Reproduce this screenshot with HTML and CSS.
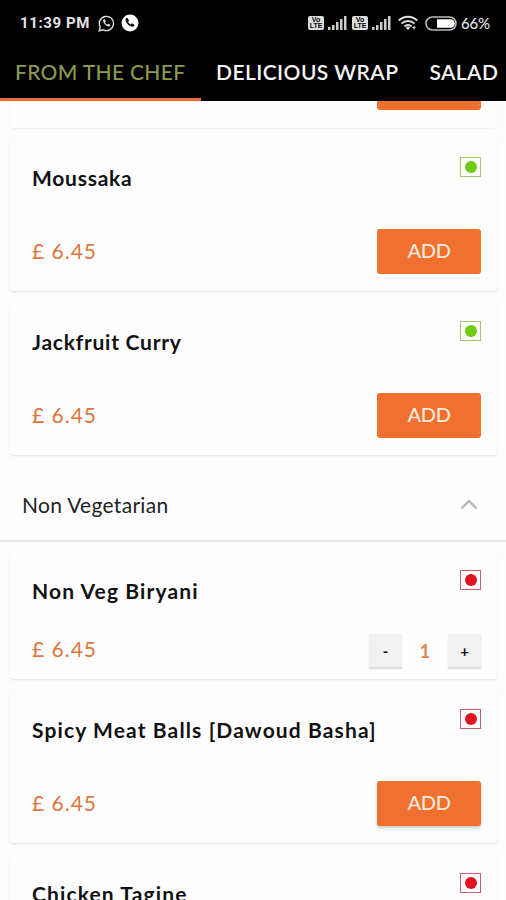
FILE: index.html
```html
<!DOCTYPE html>
<html lang="en">
<head>
<meta charset="utf-8">
<meta name="viewport" content="width=device-width, initial-scale=1">
<title>Menu</title>
<link rel="stylesheet" href="styles.css">
</head>
<body>
<div class="screen">
  <header class="top">
    <div class="status">
      <span class="clock">11:39 PM</span>
      <svg class="app" width="17" height="17" viewBox="0 0 17 17"><path d="M1.2 15.8l1-3.9A7.1 7.1 0 1 1 5.2 14.8z" fill="none" stroke="#ddd" stroke-width="1.4"/><path d="M5.8 4.3c-1.3 1-.8 3 1.1 5s4 2.800 5.200 1.500l.2-1-2-1.100-1 .9c-1-.4-1.700-1.100-2.200-2.200l.7-.9-.9-2.200z" fill="#ddd"/></svg>
      <svg class="app call" width="18" height="18" viewBox="0 0 18 18"><circle cx="9" cy="9" r="8.500" fill="#fff"/><path d="M5.300 4.100c-1.500 1.200-1 3.800 1.400 6.200s5 3.200 6.500 1.500l.1-1.200-2.400-1.300-1.200 1.100c-1.200-.5-2.100-1.400-2.600-2.600l.9-1.100-1.200-2.600z" fill="#111"/></svg>
      <div class="signals">
        <div class="volte"><span>Vo</span><span>LTE</span></div>
        <svg class="bars" width="20" height="14" viewBox="0 0 20 14"><path d="M1 11h2.500v3H1zM5 9h2.500v5H5zM9 6h2.500v8H9zM13 3h2.500v11H13zM17 0h2.500v14H17z" fill="#ccc"/></svg>
        <div class="volte"><span>Vo</span><span>LTE</span></div>
        <svg class="bars" width="20" height="14" viewBox="0 0 20 14"><path d="M1 11h2.500v3H1zM5 9h2.500v5H5zM9 6h2.500v8H9zM13 3h2.500v11H13zM17 0h2.500v14H17z" fill="#ccc"/></svg>
        <svg class="wifi" width="20" height="16" viewBox="0 0 20 16"><path d="M.8 5.500a13 13 0 0 1 18.400 0M3.600 8.600a9 9 0 0 1 12.800 0M6.400 11.500a5 5 0 0 1 7.200 0" fill="none" stroke="#ddd" stroke-width="1.900"/><path d="M7.800 12.700L10 15l2.200-2.300a3 3 0 0 0-4.400 0zM16 11l2 2h-1.400v1.500h-1.200V13H14z" fill="#ddd"/></svg>
        <svg class="battery" width="32" height="15" viewBox="0 0 32 15"><rect x="1" y="1" width="30" height="13" rx="6.500" fill="none" stroke="#bbb" stroke-width="1.600"/><path d="M12 3.200h13.500a4.300 4.300 0 0 1 0 8.600H12z" fill="#fff"/></svg>
        <span class="percent">66%</span>
      </div>
    </div>
    <nav class="tabs">
      <a class="tab active">FROM THE CHEF</a>
      <a class="tab">DELICIOUS WRAP</a>
      <a class="tab">SALAD</a>
    </nav>
  </header>
  <main class="list">
    <article class="card clipped"><div class="add"></div></article>
    <article class="card">
      <div class="row"><h3 class="snug">Moussaka</h3><i class="mark veg"></i></div>
      <div class="row buy"><span class="price">£ 6.45</span><button class="add">ADD</button></div>
    </article>
    <article class="card">
      <div class="row"><h3 class="snug">Jackfruit Curry</h3><i class="mark veg"></i></div>
      <div class="row buy"><span class="price">£ 6.45</span><button class="add">ADD</button></div>
    </article>
    <section class="section">
      <h2>Non Vegetarian</h2>
      <svg width="18" height="11" viewBox="0 0 18 11"><path d="M1.500 9.500L9 2l7.500 7.500" fill="none" stroke="#b8b8b8" stroke-width="2.400"/></svg>
    </section>
    <article class="card compact">
      <div class="row"><h3>Non Veg Biryani</h3><i class="mark nonveg"></i></div>
      <div class="row buy"><span class="price">£ 6.45</span>
        <div class="stepper"><button>-</button><span>1</span><button>+</button></div>
      </div>
    </article>
    <article class="card">
      <div class="row"><h3>Spicy Meat Balls [Dawoud Basha]</h3><i class="mark nonveg"></i></div>
      <div class="row buy"><span class="price">£ 6.45</span><button class="add raised">ADD</button></div>
    </article>
    <article class="card">
      <div class="row"><h3>Chicken Tagine</h3><i class="mark nonveg"></i></div>
    </article>
  </main>
</div>
</body>
</html>
```
FILE: styles.css
```css
* { box-sizing: border-box; }
body { margin: 0; background: #fdfdfd; font-family: Lato, sans-serif; }
.screen { width: 506px; height: 900px; overflow: hidden; display: flex; flex-direction: column; }
.top { background: #000; height: 101px; flex: none; }
.status { height: 46px; display: flex; align-items: center; padding: 0 16px 0 20px; color: #e4e4e4; }
.clock { font: 700 15px/20px Roboto, sans-serif; letter-spacing: .6px; width: 78px; white-space: nowrap; }
.call { margin-left: 6px; }
.signals { margin-left: auto; display: flex; align-items: center; }
.volte { width: 16px; height: 14px; background: #ddd; border-radius: 2px; color: #000; font: 700 7px/6px "Liberation Sans", sans-serif; display: flex; flex-direction: column; align-items: center; padding-top: 1px; }
.bars { margin: 0 5px 0 3px; }
.wifi { margin-left: 2px; }
.battery { margin: 0 4px 0 7px; }
.percent { font: 500 15px/20px Lato, sans-serif; width: 29px; white-space: nowrap; letter-spacing: -.2px; }
.tabs { height: 55px; display: flex; color: #f4f4f4; font-size: 21px; font-weight: 600; white-space: nowrap; letter-spacing: .43px; }
.tab { height: 55px; padding: 0 16px 0 15px; line-height: 51px; flex: none; }
.active { width: 201px; color: #8b9a4e; border-bottom: 3px solid #ec6b3b; font-weight: 500; letter-spacing: .33px; }
.list { flex: 1; min-height: 0; overflow: hidden; }
.card { margin: 0 9px 14px 10px; height: 150px; padding: 16px 16px 0 22px; background: #fefefe; border-radius: 4px; box-shadow: 0 1px 2px rgba(0,0,0,.12); }
.clipped { height: 27px; padding-top: 0; margin-bottom: 13px; border-radius: 0 0 4px 4px; box-shadow: 0 1px 2px rgba(0,0,0,.06); }
.clipped .add { margin-left: auto; height: 9px; border-radius: 0 0 3px 3px; }
.row { display: flex; justify-content: space-between; align-items: flex-start; }
h3 { margin: 8px 0 0; font-size: 21px; line-height: 26px; font-weight: 700; color: #111; white-space: nowrap; letter-spacing: 1.12px; }
.snug { letter-spacing: .75px; }
.mark { width: 21px; height: 20px; border: 1.5px solid; display: grid; place-items: center; }
.mark::after { content: ""; width: 12px; height: 12px; border-radius: 50%; }
.veg { border-color: #9ccb70; }
.veg::after { background: #6fcb10; }
.nonveg { border-color: #c8606c; }
.nonveg::after { background: #e01420; }
.buy { margin-top: 38px; align-items: center; height: 45px; }
.price { color: #e0743c; font-size: 21px; line-height: 26px; letter-spacing: 1px; padding-bottom: 2px; }
.add { width: 104px; height: 45px; border: 0; padding: 0 0 2px; border-radius: 3px; background: #f07030; color: #fbe9dc; font: 500 20px/43px Lato, sans-serif; letter-spacing: -.3px; }
.raised { box-shadow: 0 2px 3px rgba(0,0,0,.2); }
.section { height: 73px; margin: 13px 0 12px; display: flex; justify-content: space-between; align-items: center; padding: 0 28px 0 22px; border-bottom: 2px solid #e8e8e8; background: #fefefe; }
h2 { margin: 0; font-size: 21px; line-height: 26px; font-weight: 400; color: #222; letter-spacing: .3px; }
.compact { height: 125px; }
.compact .buy { margin-top: 23px; }
.stepper { display: flex; align-items: center; margin-top: 2px; }
.stepper button { width: 33px; height: 33px; padding: 0; border: 0; background: #f1f1f1; box-shadow: 0 2px 1px #ddd; color: #111; font: 700 15px/32px Lato, sans-serif; }
.stepper span { width: 46px; text-align: center; color: #e0834e; font: 700 18px/32px Lato, sans-serif; }
```
